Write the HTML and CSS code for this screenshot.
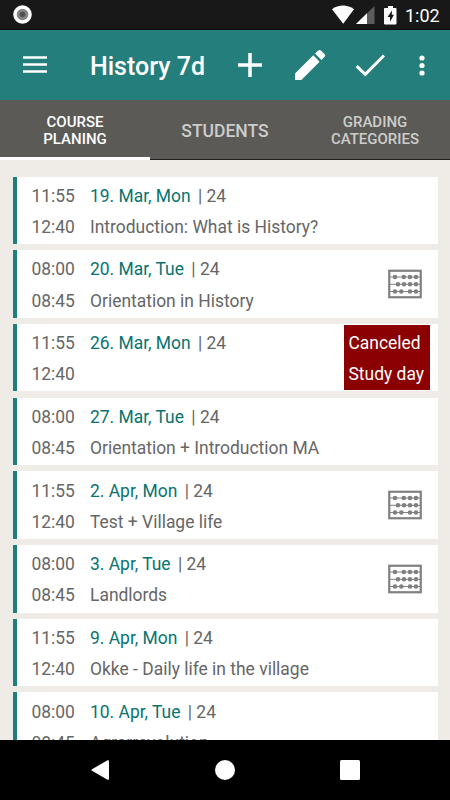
FILE: index.html
```html
<!DOCTYPE html>
<html lang="en">
<head>
    <meta charset="UTF-8">
    <meta name="viewport" content="width=device-width, initial-scale=1.0">
    <title>History 7d</title>
    <link rel="stylesheet" href="styles.css">
</head>
<body>
    <div class="screen">
        <div class="status-bar">
            <svg class="record" width="19" height="19" viewBox="0 0 19 19">
                <circle cx="9.5" cy="9.5" r="9.3" fill="#fff"/>
                <circle cx="9.5" cy="9.5" r="5.8" fill="#858585"/>
                <circle cx="9.5" cy="9.5" r="2.8" fill="#505050"/>
            </svg>
            <svg class="status-icons" width="66" height="20" viewBox="0 0 66 20">
                <path d="M0 4.2C6.500-.6 15.500-.6 22 4.200L11.200 18.700z" fill="#fff"/>
                <path d="M42.500 1v18H24z" fill="#5c5c5c"/>
                <path d="M35 8.300V19H24z" fill="#fff"/>
                <path d="M56 1h5v2h2.500q1 0 1 1v14.500q0 1-1 1h-10.500q-1 0-1-1V4q0-1 1-1H56z" fill="#fff"/>
                <path d="M60 5.500L55.500 12h2.500v4.700l4-7h-2.200z" fill="#181818"/>
            </svg>
            <span class="clock">1:02</span>
        </div>
        <div class="app-bar">
            <svg class="menu" width="24" height="17" viewBox="0 0 24 17">
                <path d="M0 1.500h24M0 8.500h24M0 15.500h24" stroke="#fff" stroke-width="2.600"/>
            </svg>
            <h1 class="title">History 7d</h1>
            <svg class="plus" width="24" height="24" viewBox="0 0 24 24">
                <path d="M12 0v24M0 12h24" stroke="#fff" stroke-width="3.500"/>
            </svg>
            <svg class="pencil" width="30" height="30" viewBox="0 0 30 30">
                <path d="M0 23.500L18.300 5.300l6.300 6.400L6.400 30H0zM20 3.600L23 .7q1.600-1.400 3.200 0l3.200 3.200q1.300 1.600 0 3.100l-3 3z" fill="#fff"/>
            </svg>
            <svg class="check" width="30" height="23" viewBox="0 0 30 23">
                <path d="M1.700 12.200l8.600 8.200L29 1.500" fill="none" stroke="#fff" stroke-width="3"/>
            </svg>
            <svg class="more" width="6" height="21" viewBox="0 0 6 21">
                <circle cx="3" cy="3" r="2.600" fill="#fff"/>
                <circle cx="3" cy="10.500" r="2.600" fill="#fff"/>
                <circle cx="3" cy="18" r="2.600" fill="#fff"/>
            </svg>
        </div>
        <div class="tabs">
            <div class="tab active">COURSE<br>PLANING</div>
            <div class="tab single">STUDENTS</div>
            <div class="tab">GRADING<br>CATEGORIES</div>
        </div>
        <svg width="0" height="0" class="defs">
            <symbol id="abacus" viewBox="0 0 34 30">
                <rect x="1.250" y="1.750" width="31.500" height="26.500" fill="none" stroke="#808080" stroke-width="2.200"/>
                <path d="M2 8h30M2 15.300h30M2 22.500h30" stroke="#808080" stroke-width="1"/>
                <g fill="#808080">
                    <circle cx="7" cy="8" r="2.300"/><circle cx="15.800" cy="8" r="2.300"/><circle cx="22" cy="8" r="2.300"/><circle cx="28" cy="8" r="2.300"/>
                    <circle cx="10" cy="15.300" r="2.300"/><circle cx="16" cy="15.300" r="2.300"/><circle cx="22" cy="15.300" r="2.300"/><circle cx="28" cy="15.300" r="2.300"/>
                    <circle cx="7" cy="22.500" r="2.300"/><circle cx="13.300" cy="22.500" r="2.300"/><circle cx="22" cy="22.500" r="2.300"/><circle cx="28" cy="22.500" r="2.300"/>
                </g>
            </symbol>
        </svg>
        <div class="list">
            <div class="lesson">
                <div class="time">11:55<br>12:40</div>
                <div class="info"><span class="date">19. Mar, Mon</span> | 24<br>Introduction: What is History?</div>
            </div>
            <div class="lesson">
                <div class="time">08:00<br>08:45</div>
                <div class="info"><span class="date">20. Mar, Tue</span> | 24<br>Orientation in History</div>
                <svg class="abacus"><use href="#abacus"/></svg>
            </div>
            <div class="lesson">
                <div class="time">11:55<br>12:40</div>
                <div class="info"><span class="date">26. Mar, Mon</span> | 24</div>
                <div class="canceled">Canceled<br>Study day</div>
            </div>
            <div class="lesson">
                <div class="time">08:00<br>08:45</div>
                <div class="info"><span class="date">27. Mar, Tue</span> | 24<br>Orientation + Introduction MA</div>
            </div>
            <div class="lesson">
                <div class="time">11:55<br>12:40</div>
                <div class="info"><span class="date">2. Apr, Mon</span> | 24<br>Test + Village life</div>
                <svg class="abacus"><use href="#abacus"/></svg>
            </div>
            <div class="lesson">
                <div class="time">08:00<br>08:45</div>
                <div class="info"><span class="date">3. Apr, Tue</span> | 24<br>Landlords</div>
                <svg class="abacus"><use href="#abacus"/></svg>
            </div>
            <div class="lesson">
                <div class="time">11:55<br>12:40</div>
                <div class="info"><span class="date">9. Apr, Mon</span> | 24<br>Okke - Daily life in the village</div>
            </div>
            <div class="lesson">
                <div class="time">08:00<br>08:45</div>
                <div class="info"><span class="date">10. Apr, Tue</span> | 24<br>Agrarrevolution</div>
            </div>
        </div>
        <div class="nav-bar">
            <svg width="18" height="20" viewBox="0 0 18 20">
                <path d="M1 9.200L16.500.3q1.500-.6 1.500 1v17.400q0 1.600-1.500 1L1 10.800q-1.200-.8 0-1.600z" fill="#fff"/>
            </svg>
            <div class="home"></div>
            <div class="recent"></div>
        </div>
    </div>
</body>
</html>
```
FILE: styles.css
```css
body {
    margin: 0;
    font-family: Roboto, sans-serif;
}
.screen {
    display: flex;
    flex-direction: column;
    width: 450px;
    height: 800px;
    overflow: hidden;
    background-color: #efece7;
}
.status-bar {
    display: flex;
    align-items: center;
    flex: none;
    box-sizing: border-box;
    height: 30px;
    padding: 0 10px 0 13px;
    background-color: #181818;
    border-bottom: 1px solid #080f0f;
}
.status-icons {
    margin-left: auto;
}
.clock {
    width: 35px;
    margin-left: 7px;
    color: #fff;
    font-size: 18px;
    line-height: 20px;
    padding-top: 3px;
}
.app-bar {
    display: flex;
    align-items: center;
    flex: none;
    height: 70px;
    padding-left: 23px;
    background-color: #247e7b;
}
.menu {
    margin-top: -1px;
}
.title {
    width: 148px;
    margin: 2px 0 0 43px;
    color: #fff;
    font-size: 25px;
    font-weight: 500;
    white-space: nowrap;
}
.pencil {
    margin-left: 33px;
}
.check {
    margin-left: 30px;
}
.more {
    margin-left: 34px;
}
.tabs {
    display: flex;
    flex: none;
    height: 60px;
    background-color: #5b5a56;
}
.tab {
    display: flex;
    align-items: center;
    justify-content: center;
    box-sizing: border-box;
    width: 150px;
    padding-top: 3px;
    border-bottom: 1px solid #20201e;
    color: #cdcdcb;
    font-size: 15px;
    font-weight: 500;
    line-height: 17.5px;
    text-align: center;
}
.active {
    padding-top: 5px;
    color: #fff;
    border-bottom: 3px solid #fff;
}
.single {
    padding-top: 4px;
    font-size: 17.5px;
}
.defs {
    position: absolute;
}
.list {
    display: flex;
    flex-direction: column;
    gap: 6.2px;
    height: 563.4px;
    padding: 16.6px 12.5px 0 13px;
    overflow: hidden;
}
.lesson {
    display: flex;
    align-items: center;
    flex: none;
    box-sizing: border-box;
    height: 67.5px;
    padding-left: 14.5px;
    border-left: 4px solid #1d7e7a;
    background-color: #fff;
    color: #666;
    font-size: 17.45px;
    line-height: 31.25px;
}
.time {
    align-self: flex-start;
    width: 58.5px;
    padding-top: 4.2px;
}
.info {
    align-self: flex-start;
    flex: 1;
    padding-top: 4.2px;
    white-space: nowrap;
}
.date {
    margin-right: 3px;
    color: #087370;
}
.abacus {
    width: 34px;
    height: 30px;
    margin-right: 15.5px;
}
.canceled {
    box-sizing: border-box;
    width: 86px;
    height: 64.5px;
    margin-right: 8px;
    padding: 2.4px 0 0 5px;
    background-color: #8b0000;
    color: #fff;
    white-space: nowrap;
}
.nav-bar {
    display: flex;
    align-items: center;
    flex: none;
    height: 60px;
    padding-left: 91px;
    background-color: #000;
}
.home {
    width: 20px;
    height: 20px;
    margin-left: 106px;
    border-radius: 50%;
    background-color: #fff;
}
.recent {
    width: 19.5px;
    height: 19.5px;
    margin-left: 105px;
    border-radius: 1.5px;
    background-color: #fff;
}
```
